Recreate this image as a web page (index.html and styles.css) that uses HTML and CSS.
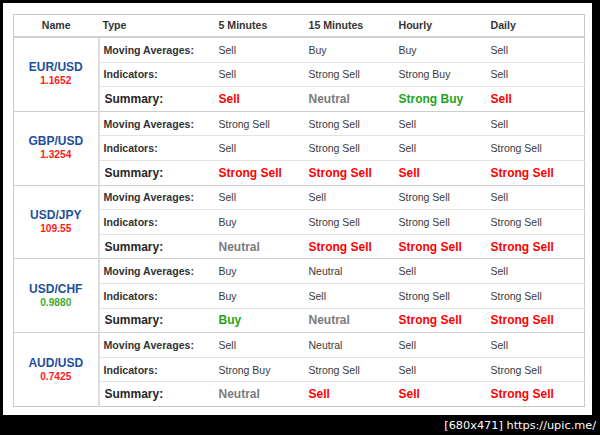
FILE: index.html
```html
<!DOCTYPE html>
<html>
<head>
<meta charset="utf-8">
<link rel="stylesheet" href="styles.css">
</head>
<body>
<div class="frame">
  <div class="panel">
    <table class="tech">
      <colgroup>
        <col class="c-name"><col class="c-type"><col class="c-5m"><col class="c-15m"><col class="c-h"><col class="c-d">
      </colgroup>
      <thead>
        <tr><th class="th-name">Name</th><th>Type</th><th>5 Minutes</th><th>15 Minutes</th><th>Hourly</th><th>Daily</th></tr>
      </thead>
      <tbody class="pair">
        <tr><td class="name" rowspan="3"><span class="sym">EUR/USD</span><span class="price down">1.1652</span></td><td class="type">Moving Averages:</td><td>Sell</td><td>Buy</td><td>Buy</td><td>Sell</td></tr>
        <tr><td class="type">Indicators:</td><td>Sell</td><td>Strong Sell</td><td>Strong Buy</td><td>Sell</td></tr>
        <tr class="sum"><td class="type">Summary:</td><td class="sell">Sell</td><td class="neutral">Neutral</td><td class="buy">Strong Buy</td><td class="sell">Sell</td></tr>
      </tbody>
      <tbody class="pair">
        <tr><td class="name" rowspan="3"><span class="sym">GBP/USD</span><span class="price down">1.3254</span></td><td class="type">Moving Averages:</td><td>Strong Sell</td><td>Strong Sell</td><td>Sell</td><td>Sell</td></tr>
        <tr><td class="type">Indicators:</td><td>Sell</td><td>Strong Sell</td><td>Sell</td><td>Strong Sell</td></tr>
        <tr class="sum"><td class="type">Summary:</td><td class="sell">Strong Sell</td><td class="sell">Strong Sell</td><td class="sell">Sell</td><td class="sell">Strong Sell</td></tr>
      </tbody>
      <tbody class="pair">
        <tr><td class="name" rowspan="3"><span class="sym">USD/JPY</span><span class="price down">109.55</span></td><td class="type">Moving Averages:</td><td>Sell</td><td>Sell</td><td>Strong Sell</td><td>Sell</td></tr>
        <tr><td class="type">Indicators:</td><td>Buy</td><td>Strong Sell</td><td>Strong Sell</td><td>Strong Sell</td></tr>
        <tr class="sum"><td class="type">Summary:</td><td class="neutral">Neutral</td><td class="sell">Strong Sell</td><td class="sell">Strong Sell</td><td class="sell">Strong Sell</td></tr>
      </tbody>
      <tbody class="pair">
        <tr><td class="name" rowspan="3"><span class="sym">USD/CHF</span><span class="price up">0.9880</span></td><td class="type">Moving Averages:</td><td>Buy</td><td>Neutral</td><td>Sell</td><td>Sell</td></tr>
        <tr><td class="type">Indicators:</td><td>Buy</td><td>Sell</td><td>Strong Sell</td><td>Strong Sell</td></tr>
        <tr class="sum"><td class="type">Summary:</td><td class="buy">Buy</td><td class="neutral">Neutral</td><td class="sell">Strong Sell</td><td class="sell">Strong Sell</td></tr>
      </tbody>
      <tbody class="pair">
        <tr><td class="name" rowspan="3"><span class="sym">AUD/USD</span><span class="price down">0.7425</span></td><td class="type">Moving Averages:</td><td>Sell</td><td>Neutral</td><td>Sell</td><td>Sell</td></tr>
        <tr><td class="type">Indicators:</td><td>Strong Buy</td><td>Strong Sell</td><td>Sell</td><td>Strong Sell</td></tr>
        <tr class="sum"><td class="type">Summary:</td><td class="neutral">Neutral</td><td class="sell">Sell</td><td class="sell">Sell</td><td class="sell">Strong Sell</td></tr>
      </tbody>
    </table>
  </div>
  <div class="mark">[680x471] https://upic.me/</div>
</div>
</body>
</html>
```
FILE: styles.css
```css
html, body {
  margin: 0;
  padding: 0;
  background: #000;
}
.frame {
  width: 600px;
  height: 435px;
  background: #000;
  padding-top: 3px;
  box-sizing: border-box;
}
.panel {
  margin-left: 3px;
  width: 589px;
  height: 412px;
  background: #fff;
  padding: 11px 0 0 10px;
  box-sizing: border-box;
}
.tech {
  border-collapse: collapse;
  table-layout: fixed;
  width: 571px;
  font-family: "Liberation Sans", Arial, sans-serif;
  color: #333;
  border: 1px solid #c9c9c9;
}
.c-name { width: 85px; }
.c-type { width: 116px; }
.c-5m { width: 90px; }
.c-15m { width: 90px; }
.c-h { width: 92px; }
.c-d { width: 98px; }
th {
  font-size: 10.6px;
  font-weight: bold;
  text-align: left;
  padding: 0 0 1px 4px;
  height: 20px;
  border-bottom: 2px solid #cfcfcf;
  color: #333;
}
th.th-name {
  text-align: center;
  padding: 0 0 1px 0;
}
td {
  font-size: 10.5px;
  padding: 0 0 0 4px;
  height: 23.6px;
  border-top: 1px solid #e3e3e3;
  color: #3a3a3a;
  white-space: nowrap;
}
tbody.pair tr:first-child td {
  border-top: 1px solid #cdcdcd;
}
td.name {
  text-align: center;
  padding: 0;
  border-right: 2px solid #dcdcdc;
}
td.type {
  font-weight: bold;
  font-size: 10.6px;
  color: #333;
}
.sym {
  display: block;
  font-size: 12px;
  font-weight: bold;
  color: #1d4f9a;
  line-height: 14px;
}
.price {
  display: block;
  font-size: 10.2px;
  font-weight: bold;
  line-height: 14px;
}
.price.down { color: #ff1a1a; }
.price.up { color: #3dab2e; }
tr.sum td {
  font-size: 12px;
  font-weight: bold;
}
tr.sum td.type {
  padding-left: 5px;
  color: #262626;
}
td.sell { color: #ff0000; }
td.buy { color: #1fa31a; }
td.neutral { color: #7b7b7b; }
.mark {
  display: flex;
  justify-content: flex-end;
  padding: 3px 4px 0 0;
  font-family: "DejaVu Sans", sans-serif;
  font-size: 11.3px;
  color: #fff;
  line-height: 15px;
}
```
